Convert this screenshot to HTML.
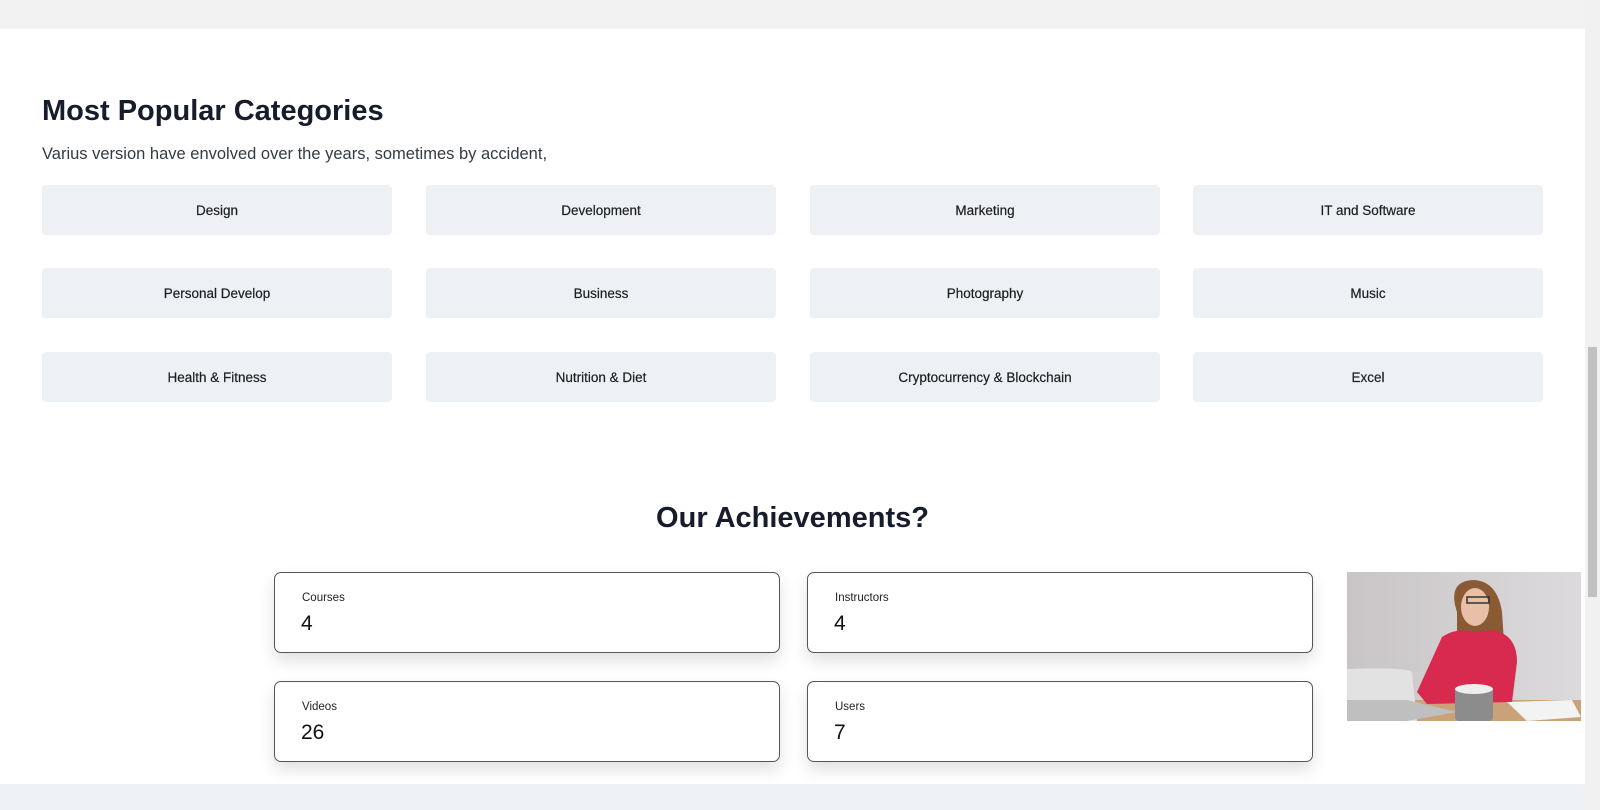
<!DOCTYPE html>
<html><head><meta charset="utf-8"><style>
*{box-sizing:border-box;margin:0;padding:0}
body{width:1600px;height:810px;overflow:hidden;background:#fff;font-family:"Liberation Sans",sans-serif;color:#1a1f2c;position:relative}
.top{position:absolute;left:0;top:0;width:1585px;height:29px;background:#f2f2f2}
.bot{position:absolute;left:0;top:784px;width:1585px;height:26px;background:#edf1f6}
.sb{position:absolute;left:1585px;top:0;width:15px;height:810px;background:#f1f1f1}
.thumb{position:absolute;left:1588px;top:347px;width:9px;height:250px;background:#c1c1c1}
h1{position:absolute;left:42px;top:95px;font-size:29px;font-weight:bold;color:#161c2b}
.sub{position:absolute;left:42px;top:145px;font-size:16.5px;color:#333a45}
.c{position:absolute;width:350px;height:50px;background:#edf1f6;border-radius:4px;display:flex;align-items:center;justify-content:center;font-size:13.5px;color:#1e1e1e;-webkit-text-stroke:0.2px #1e1e1e}
h2{position:absolute;left:0;width:1585px;text-align:center;top:502px;font-size:29px;font-weight:bold;color:#161c2b}
.s{position:absolute;width:506px;height:81px;border:1px solid #555;border-radius:7px;background:#fff;box-shadow:0 8px 16px rgba(0,0,0,.12)}
.s .l{position:absolute;left:27px;top:19px;font-size:11.5px;color:#222}
.s .n{position:absolute;left:26px;top:39px;font-size:21px;color:#111}
</style></head><body>
<div class="top"></div>
<h1>Most Popular Categories</h1>
<div class="sub">Varius version have envolved over the years, sometimes by accident,</div>
<div class="c" style="left:42px;top:185px">Design</div>
<div class="c" style="left:426px;top:185px">Development</div>
<div class="c" style="left:810px;top:185px">Marketing</div>
<div class="c" style="left:1193px;top:185px">IT and Software</div>
<div class="c" style="left:42px;top:268px">Personal Develop</div>
<div class="c" style="left:426px;top:268px">Business</div>
<div class="c" style="left:810px;top:268px">Photography</div>
<div class="c" style="left:1193px;top:268px">Music</div>
<div class="c" style="left:42px;top:352px">Health &amp; Fitness</div>
<div class="c" style="left:426px;top:352px">Nutrition &amp; Diet</div>
<div class="c" style="left:810px;top:352px">Cryptocurrency &amp; Blockchain</div>
<div class="c" style="left:1193px;top:352px">Excel</div>
<h2>Our Achievements?</h2>
<div class="s" style="left:274px;top:572px"><div class="l">Courses</div><div class="n">4</div></div>
<div class="s" style="left:807px;top:572px"><div class="l">Instructors</div><div class="n">4</div></div>
<div class="s" style="left:274px;top:681px"><div class="l">Videos</div><div class="n">26</div></div>
<div class="s" style="left:807px;top:681px"><div class="l">Users</div><div class="n">7</div></div>
<svg style="position:absolute;left:1347px;top:572px" width="234" height="149" viewBox="0 0 234 149">
<defs><linearGradient id="bg" x1="0" x2="1"><stop offset="0" stop-color="#c9c5c7"/><stop offset="1" stop-color="#dcdadc"/></linearGradient></defs>
<rect width="234" height="149" fill="url(#bg)"/>
<rect x="0" y="128" width="234" height="21" fill="#c9a27a"/>
<path d="M110 40 Q100 10 125 8 Q150 8 155 40 L160 115 L110 115 Z" fill="#8a5a35"/>
<path d="M70 120 L95 65 Q110 55 125 60 L145 58 Q170 62 170 90 L165 130 L80 132 Z" fill="#d8294f"/>
<ellipse cx="128" cy="35" rx="14" ry="19" fill="#e8c0a8"/>
<rect x="120" y="25" width="22" height="6" fill="none" stroke="#333" stroke-width="1.5"/>
<path d="M0 100 L0 149 L70 149 L65 100 Q60 95 0 97 Z" fill="#e2e2e2"/>
<path d="M0 128 L60 128 L110 140 L60 149 L0 149Z" fill="#bfbfbf"/>
<rect x="108" y="115" width="38" height="34" rx="4" fill="#8c8c8c"/>
<ellipse cx="127" cy="117" rx="19" ry="5" fill="#eee"/>
<path d="M160 130 L225 128 L234 145 L180 149Z" fill="#f3f3f3"/>
</svg>
<div class="bot"></div>
<div class="sb"></div><div class="thumb"></div>
</body></html>
